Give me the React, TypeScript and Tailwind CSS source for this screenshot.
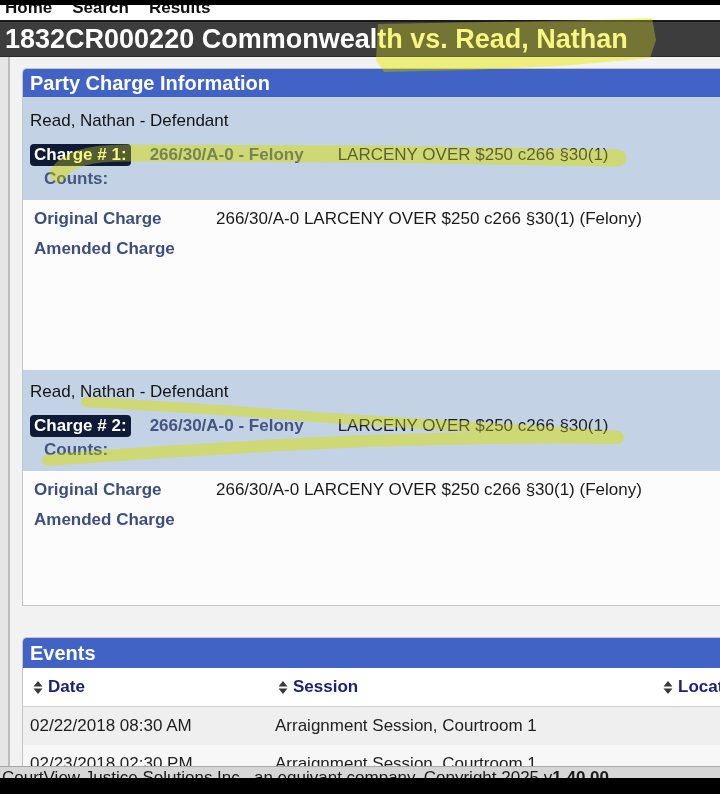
import React from "react";

const SortIcon = () => (
  <svg width="10" height="15" viewBox="0 0 10 15" className="shrink-0">
    <path d="M0.5 6.5 L5 1 L9.5 6.5Z M0.5 8.5 L9.5 8.5 L5 14Z" fill="#3a3a3a" />
  </svg>
);

function ChargeBlock({ n, pt }: { n: number; pt: string }) {
  return (
    <>
      <div className={`bg-[#c3d3e5] pl-[7px] ${pt} pb-[11px]`}>
        <div className="h-[20px] leading-[20px] text-[17px] text-[#141414]">Read, Nathan - Defendant</div>
        <div className="mt-[13px] flex items-center h-[22px]">
          <span className="bg-[#0e1a36] text-white font-bold text-[17px] leading-[22px] h-[22px] px-[4px] rounded-[4px]">
            Charge # {n}:
          </span>
          <span className="ml-[19px] font-bold text-[17px] text-[#44557f]">266/30/A-0 - Felony</span>
          <span className="ml-[34px] text-[17px] text-[#1e1e1e]">LARCENY OVER $250 c266 §30(1)</span>
        </div>
        <div className="mt-[3px] pl-[14px] h-[20px] leading-[20px] font-bold text-[17px] text-[#45567f]">Counts:</div>
      </div>
      <div className={`bg-[#fcfcfc] pl-[11px] pt-[9px] ${n === 1 ? "h-[170px]" : "h-[134px]"}`}>
        <div className="grid grid-cols-[182px_1fr] gap-y-[10px] text-[17px] leading-[20px]">
          <div className="font-bold text-[#3d4f7e]">Original Charge</div>
          <div className="text-[#1a1a1a]">266/30/A-0 LARCENY OVER $250 c266 §30(1) (Felony)</div>
          <div className="font-bold text-[#3d4f7e]">Amended Charge</div>
          <div></div>
        </div>
      </div>
    </>
  );
}

function Marks({ color }: { color: string }) {
  return (
    <>
      <path d="M378 24 L600 20 L652 18 L656 40 L650 58 L560 66 L470 70 L384 72 L376 60 Z" fill={color} />
      <g fill="none" stroke={color} strokeLinecap="round">
        <path d="M58 174 Q70 152 130 153 L380 154 L618 158" strokeWidth="17" />
        <path d="M86 402 Q200 408 330 418 Q480 428 618 436" strokeWidth="10" />
        <path d="M48 460 Q150 452 300 444 Q470 436 618 438" strokeWidth="12" />
      </g>
    </>
  );
}

export default function App() {
  return (
    <div className="relative w-[720px] h-[794px] overflow-hidden flex flex-col bg-[#f1f1f1] font-['Liberation_Sans',Arial,sans-serif]">
      <div className="h-[5px] bg-black shrink-0" />
      <div className="h-[15px] bg-white overflow-hidden shrink-0">
        <div className="flex gap-[20px] pl-[5px] mt-[-6px] text-[17px] leading-[17px] font-bold text-[#111]">
          <span>Home</span>
          <span>Search</span>
          <span>Results</span>
        </div>
      </div>
      <div className="h-[2px] bg-[#1a1a1a] shrink-0" />
      <div className="h-[35px] bg-[#3d3d3d] shrink-0 pl-[5px] flex items-center border-b border-[#2a2a2a]">
        <span className="text-white font-bold text-[27px] leading-[35px] whitespace-nowrap">
          1832CR000220 Commonwealth vs. Read, Nathan
        </span>
      </div>
      <div className="flex-1 flex min-h-0 overflow-hidden">
        <div className="w-[8px] bg-[#e6e6e6] shrink-0" />
        <div className="w-[2px] bg-[#bdbdbd] shrink-0" />
        <div className="flex-1 min-w-0 bg-[#f2f2f2] pl-[12px] pt-[11px] flex flex-col">
          <div className="mr-[-40px] border-l border-t border-b border-[#c5c5c5] rounded-tl-[5px] overflow-hidden">
            <div className="h-[28px] bg-[#4163c6] pl-[7px] text-white font-bold text-[20px] leading-[28px]">
              Party Charge Information
            </div>
            <ChargeBlock n={1} pt="pt-[14px]" />
            <ChargeBlock n={2} pt="pt-[12px]" />
          </div>
          <div className="mt-[31px] mr-[-40px] border-l border-t border-[#c5c5c5] rounded-tl-[5px] overflow-hidden flex-1">
            <div className="h-[30px] bg-[#4163c6] pl-[7px] text-white font-bold text-[20px] leading-[30px]">Events</div>
            <div className="grid grid-cols-[252px_385px_1fr] h-[39px] bg-white border-b border-[#cfcfcf] items-center text-[17px] font-bold text-[#1b2277]">
              <div className="pl-[10px] flex items-center gap-[5px]"><SortIcon />Date</div>
              <div className="pl-[3px] flex items-center gap-[5px]"><SortIcon />Session</div>
              <div className="pl-[3px] flex items-center gap-[5px]"><SortIcon />Location</div>
            </div>
            <div className="grid grid-cols-[252px_385px_1fr] h-[38px] bg-[#efefef] items-center text-[17px] text-[#1e1e1e]">
              <div className="pl-[7px]">02/22/2018 08:30 AM</div>
              <div>Arraignment Session, Courtroom 1</div>
              <div></div>
            </div>
            <div className="grid grid-cols-[252px_385px_1fr] h-[38px] bg-[#f7f7f7] items-center text-[17px] text-[#1e1e1e]">
              <div className="pl-[7px]">02/23/2018 02:30 PM</div>
              <div>Arraignment Session, Courtroom 1</div>
              <div></div>
            </div>
          </div>
        </div>
      </div>
      <div className="h-[12px] shrink-0 bg-[#d6d6d6] border-t border-[#a8a8a8] overflow-hidden">
        <div className="pl-[2px] pt-[1px] text-[17px] leading-[20px] text-[#1a1a1a] whitespace-nowrap">
          CourtView Justice Solutions Inc., an equivant company. Copyright 2025 v<b>1.40.00</b>
        </div>
      </div>
      <div className="h-[16px] shrink-0 bg-black" />

      <svg
        className="absolute inset-0 pointer-events-none mix-blend-multiply"
        width="720"
        height="794"
        viewBox="0 0 720 794"
        opacity="0.7"
      >
        <Marks color="#f5f560" />
      </svg>
      <svg
        className="absolute inset-0 pointer-events-none"
        width="720"
        height="794"
        viewBox="0 0 720 794"
        opacity="0.3"
      >
        <Marks color="#f5f560" />
      </svg>
    </div>
  );
}
